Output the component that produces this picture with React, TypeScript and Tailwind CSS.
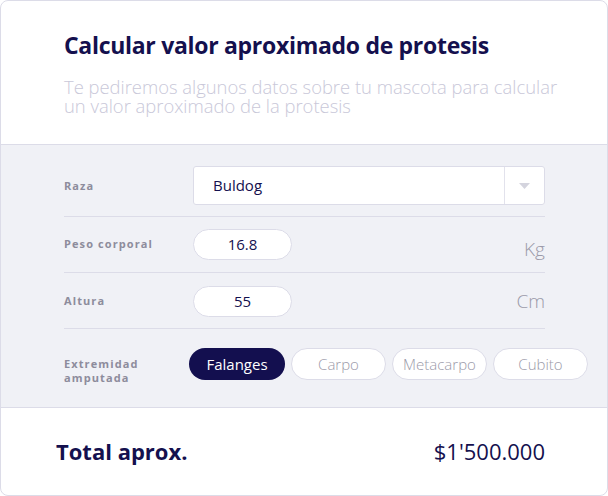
import React from "react";

const font = { fontFamily: '"Open Sans", "Noto Sans", sans-serif' };

function Label({ children, leading = "leading-[13px]" }: { children: React.ReactNode; leading?: string }) {
  return (
    <div className={`w-[125px] shrink-0 text-[11px] font-bold ${leading} tracking-[1.1px] text-[#8d8c9c]`}>
      {children}
    </div>
  );
}

export default function App() {
  const options = ["Falanges", "Carpo", "Metacarpo", "Cubito"];
  return (
    <div style={font} className="w-[608px] h-[496px] bg-white">
      <div className="w-full h-full border border-[#dcdce8] rounded-[8px] overflow-hidden flex flex-col">
        <div className="h-[144px] shrink-0 pl-[63px] pt-[29px] border-b border-[#dcdce8]">
          <h1 className="text-[23px] font-bold text-[#14104e] leading-[30px] tracking-[-0.3px]">
            Calcular valor aproximado de protesis
          </h1>
          <p className="mt-[17px] text-[18.4px] font-light leading-[19px] text-[#c9c8d9] w-[505px]">
            Te pediremos algunos datos sobre tu mascota para calcular un valor aproximado de la protesis
          </p>
        </div>
        <div className="flex-1 bg-[#f0f1f6] pl-[63px] pr-[62px]">
          <div className="h-[72px] flex items-start pt-[21px] border-b border-[#dcdce8]">
            <div className="h-[39px] flex items-center">
              <Label>Raza</Label>
            </div>
            <div className="ml-[4px] flex-1 h-[39px] bg-white border border-[#dcdce8] rounded-[3px] flex items-center">
              <span className="flex-1 pl-[19px] text-[15px] text-[#14104e]">Buldog</span>
              <div className="w-[40px] h-full border-l border-[#e2e2ec] flex items-center justify-center">
                <svg width="11" height="6" viewBox="0 0 11 6">
                  <path d="M0 0H11L5.5 6Z" fill="#d4d4de" />
                </svg>
              </div>
            </div>
          </div>
          <div className="h-[56px] flex items-start pt-[12px] border-b border-[#dcdce8]">
            <div className="h-[29px] flex items-center">
              <Label>Peso corporal</Label>
            </div>
            <div className="ml-[4px] w-[99px] h-[31px] bg-white border border-[#dcdce8] rounded-full flex items-center justify-center text-[15px] text-[#14104e]">
              16.8
            </div>
            <div className="flex-1 text-right text-[19px] font-light leading-[24px] text-[#9b9aa9] pt-[8px]">Kg</div>
          </div>
          <div className="h-[56px] flex items-start pt-[13px] border-b border-[#dcdce8]">
            <div className="h-[29px] flex items-center">
              <Label>Altura</Label>
            </div>
            <div className="ml-[4px] w-[99px] h-[31px] bg-white border border-[#dcdce8] rounded-full flex items-center justify-center text-[15px] text-[#14104e]">
              55
            </div>
            <div className="flex-1 text-right text-[19px] font-light leading-[24px] text-[#9b9aa9] pt-[3px]">Cm</div>
          </div>
          <div className="flex items-start pt-[19px] mr-[-50px]">
            <div className="pt-[9px]">
              <Label leading="leading-[14px]">
                Extremidad
                <br />
                amputada
              </Label>
            </div>
            <div className="flex gap-[6px]">
              {options.map((o, i) =>
                i === 0 ? (
                  <div
                    key={o}
                    className="w-[96px] h-[32px] rounded-full bg-[#130f4f] text-white text-[15px] flex items-center justify-center"
                  >
                    {o}
                  </div>
                ) : (
                  <div
                    key={o}
                    className="w-[95px] h-[32px] rounded-full bg-white border border-[#dcdce8] text-[#9b9aa9] text-[15px] font-light flex items-center justify-center"
                  >
                    {o}
                  </div>
                )
              )}
            </div>
          </div>
        </div>
        <div className="h-[88px] shrink-0 border-t border-[#dcdce8] flex items-center justify-between pl-[55px] pr-[62px]">
          <span className="text-[22px] font-bold text-[#14104e]">Total aprox.</span>
          <span className="text-[22px] text-[#14104e]">$1'500.000</span>
        </div>
      </div>
    </div>
  );
}
